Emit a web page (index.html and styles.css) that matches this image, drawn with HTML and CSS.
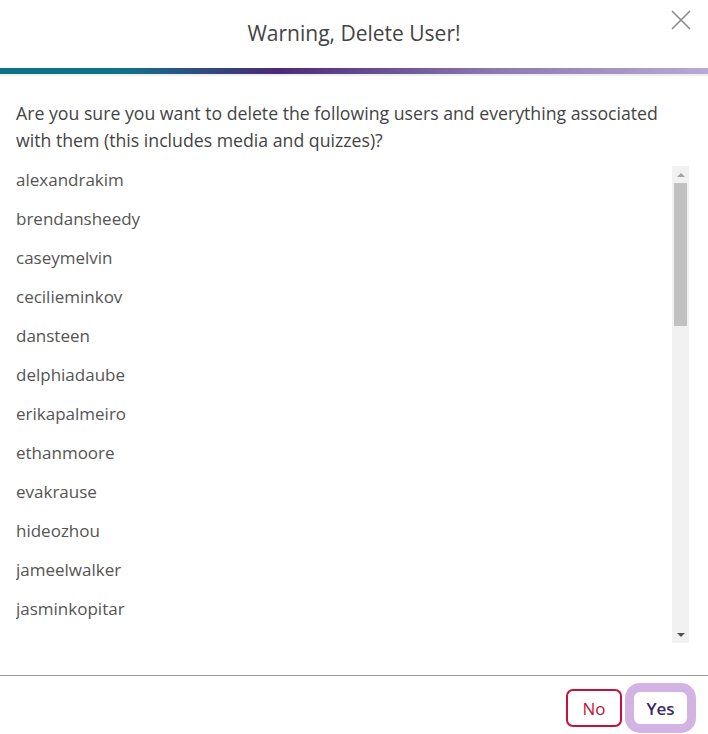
FILE: index.html
```html
<!DOCTYPE html>
<html lang="en">

<head>
  <meta charset="UTF-8">
  <meta name="viewport" content="width=device-width, initial-scale=1.0">
  <title>Warning, Delete User!</title>
  <link rel="stylesheet" href="styles.css">
</head>

<body>
  <div class="modal">
    <div class="modal-header">
      <h2>Warning, Delete User!</h2>
      <button class="close" aria-label="Close">
        <svg width="20" height="20" viewBox="0 0 20 20">
          <path d="M1 1 L19 19 M19 1 L1 19" stroke="#8a8a8a" stroke-width="1.6" fill="none" />
        </svg>
      </button>
    </div>
    <div class="accent-bar"></div>

    <div class="modal-body">
      <p class="question">Are you sure you want to delete the following users and everything associated with them (this includes media and quizzes)?</p>
      <div class="list-wrap">
        <ul class="user-list">
          <li>alexandrakim</li>
          <li>brendansheedy</li>
          <li>caseymelvin</li>
          <li>cecilieminkov</li>
          <li>dansteen</li>
          <li>delphiadaube</li>
          <li>erikapalmeiro</li>
          <li>ethanmoore</li>
          <li>evakrause</li>
          <li>hideozhou</li>
          <li>jameelwalker</li>
          <li>jasminkopitar</li>
        </ul>
        <!-- scrollbar as drawn by the browser -->
        <div class="scrollbar">
          <div class="scroll-btn"><span class="arrow-up"></span></div>
          <div class="scroll-thumb"></div>
          <div class="scroll-btn scroll-btn-down"><span class="arrow-down"></span></div>
        </div>
      </div>
    </div>

    <div class="modal-footer">
      <button class="btn btn-no">No</button>
      <button class="btn btn-yes">Yes</button>
    </div>
  </div>
</body>

</html>
```

FILE: styles.css
```css
/* General Body Styles */
body {
  font-family: 'Open Sans', sans-serif;
  background: #fff;
  color: #444;
  margin: 0;
  padding: 0;
}

.modal {
  width: 708px;
  height: 734px;
  display: flex;
  flex-direction: column;
  background: #fff;
}

/* Header */
.modal-header {
  height: 68px;
  display: flex;
  align-items: center;
  justify-content: center;
  position: relative;
}

.modal-header h2 {
  margin: 0;
  font-size: 21px;
  font-weight: 500;
  color: #444;
  padding-bottom: 2px;
}

.close {
  position: absolute;
  top: 10px;
  right: 17px;
  width: 20px;
  height: 20px;
  padding: 0;
  border: none;
  background: none;
  cursor: pointer;
}

.close svg {
  display: block;
}

.accent-bar {
  height: 6px;
  background: linear-gradient(90deg, #0e7186 0%, #10728a 17%, #4a2a76 39%, #8c79b1 70%, #b8aad2 100%);
  border-bottom: 2px solid #eeeeee;
}

/* Body */
.modal-body {
  padding: 24px 19px 0 16px;
}

.question {
  margin: 0 0 12px;
  font-size: 17.7px;
  line-height: 27px;
  color: #444;
}

.list-wrap {
  display: flex;
  height: 477px;
}

.user-list {
  flex: 1;
  list-style: none;
  margin: 0;
  padding: 0;
  overflow: hidden;
}

.user-list li {
  font-size: 17px;
  line-height: 28px;
  margin-bottom: 11px;
  color: #555;
}

/* Scrollbar */
.scrollbar {
  width: 17px;
  background: #f1f1f1;
  display: flex;
  flex-direction: column;
}

.scroll-btn {
  height: 17px;
  display: flex;
  align-items: center;
  justify-content: center;
}

.scroll-btn-down {
  margin-top: auto;
}

.arrow-up {
  border-left: 4px solid transparent;
  border-right: 4px solid transparent;
  border-bottom: 4px solid #a3a3a3;
}

.arrow-down {
  border-left: 4px solid transparent;
  border-right: 4px solid transparent;
  border-top: 4px solid #505050;
}

.scroll-thumb {
  height: 143px;
  margin: 0 2px;
  background: #c1c1c1;
}

/* Footer */
.modal-footer {
  margin-top: auto;
  border-top: 1px solid #999;
  height: 59px;
  display: flex;
  justify-content: flex-end;
  align-items: flex-start;
  gap: 9px;
  padding: 13px 18px 0 0;
  box-sizing: border-box;
}

.btn {
  height: 38px;
  padding: 0 10px;
  font-family: inherit;
  font-size: 17px;
  background: #fff;
  border-radius: 7px;
  cursor: pointer;
}

.btn-no {
  border: 2px solid #c4123a;
  color: #c4123a;
  width: 56px;
}

.btn-yes {
  border: 3px solid #d3b3e3;
  color: #3d2868;
  font-weight: 600;
  width: 59px;
  box-shadow: 0 0 0 6px #d3b3e3;
  border-radius: 9px;
}
```
